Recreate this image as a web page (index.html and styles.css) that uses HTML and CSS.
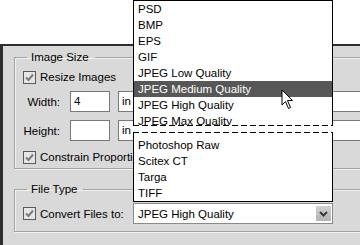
FILE: index.html
```html
<!DOCTYPE html>
<html lang="en">
<head>
    <meta charset="UTF-8">
    <title>Batch Options</title>
    <link rel="stylesheet" href="styles.css">
</head>
<body>
    <div class="dialog">
        <fieldset class="group size-group">
            <legend>Image Size</legend>
            <div class="check-row"><span class="check"><svg viewBox="0 0 11 11"><path d="M2 5.5 L4.5 8 L9 2.5" /></svg></span>Resize Images</div>
            <div class="field-row">
                <span class="field-label">Width:</span>
                <span class="text-box">4</span>
                <span class="unit-box">in</span>
            </div>
            <div class="field-row tall-gap">
                <span class="field-label">Height:</span>
                <span class="text-box"></span>
                <span class="unit-box">in</span>
            </div>
            <div class="check-row last-check"><span class="check"><svg viewBox="0 0 11 11"><path d="M2 5.5 L4.5 8 L9 2.5" /></svg></span><span class="clip-label">Constrain Proportions</span></div>
        </fieldset>

        <fieldset class="group type-group">
            <legend>File Type</legend>
            <div class="convert-row">
                <div class="check-row convert-check"><span class="check"><svg viewBox="0 0 11 11"><path d="M2 5.5 L4.5 8 L9 2.5" /></svg></span>Convert Files to:</div>
                <div class="select-box">
                    <span>JPEG High Quality</span>
                    <span class="select-btn"><svg viewBox="0 0 9 6"><path d="M1 1 L4.5 4.5 L8 1" /></svg></span>
                </div>
            </div>
        </fieldset>
    </div>

    <!-- Open list of the file type menu, drawn in two torn pieces -->
    <div class="menu menu-top">
        <div class="menu-list">
            <div class="menu-item">PSD</div>
            <div class="menu-item">BMP</div>
            <div class="menu-item">EPS</div>
            <div class="menu-item">GIF</div>
            <div class="menu-item">JPEG Low Quality</div>
            <div class="menu-item selected">JPEG Medium Quality</div>
            <div class="menu-item">JPEG High Quality</div>
            <div class="menu-item">JPEG Max Quality</div>
        </div>
        <div class="tear"></div>
    </div>
    <div class="menu menu-bottom">
        <div class="tear"></div>
        <div class="menu-list">
            <div class="menu-item">Photoshop Raw</div>
            <div class="menu-item">Scitex CT</div>
            <div class="menu-item">Targa</div>
            <div class="menu-item">TIFF</div>
        </div>
    </div>

    <svg class="cursor" viewBox="0 0 13 21" width="13" height="21">
        <path d="M1 1 L1 16 L4.5 12.5 L7.5 19.5 L9.5 18.5 L6.5 11.5 L11.5 11.5 Z" />
    </svg>
</body>
</html>
```

FILE: styles.css
```css
body {
    margin: 0;
    width: 360px;
    height: 245px;
    overflow: hidden;
    position: relative;
    background: #fff;
    font-family: "Liberation Sans", Arial, sans-serif;
    font-size: 11.5px;
    color: #000;
}
.dialog {
    margin-top: 44px;
    height: 199px;
    background: #d9d9d9;
    border-top: 2px solid #2e2e2e;
    border-left: 3px solid #2e2e2e;
    padding-left: 11px;
    overflow: hidden;
}
.group {
    margin: 4px -30px 0 0;
    padding: 0 0 4px 8px;
    border: 1px solid #a2a2a2;
    box-shadow: inset 1px 1px 0 #f2f2f2, 1px 1px 0 #f2f2f2;
    min-width: 0;
}
.group legend {
    margin-left: 4px;
    padding: 0 6px 0 4px;
    line-height: 14px;
}
.type-group {
    margin-top: 13px;
    padding-bottom: 7px;
}
.check-row {
    display: flex;
    align-items: center;
    gap: 4px;
    height: 14px;
    margin-top: 6px;
}
.last-check {
    margin-top: 9px;
}
.clip-label {
    width: 93px;
    overflow: hidden;
    white-space: nowrap;
}
.check {
    width: 11px;
    height: 11px;
    border: 1px solid #5a5a5a;
    background: #e6e6e6;
    display: flex;
}
.check svg {
    width: 11px;
    height: 11px;
    fill: none;
    stroke: #7c7c7c;
    stroke-width: 2;
}
.field-row {
    display: flex;
    align-items: center;
    height: 21px;
    margin-top: 7px;
}
.tall-gap {
    margin-top: 8px;
}
.field-label {
    width: 37px;
    text-align: right;
    margin-right: 10px;
}
.text-box {
    width: 35px;
    height: 19px;
    line-height: 19px;
    padding-left: 3px;
    border: 1px solid #7a7a7a;
    background: #fff;
    margin-right: 8px;
}
.unit-box {
    width: 260px;
    height: 19px;
    line-height: 19px;
    padding-left: 3px;
    border: 1px solid #7a7a7a;
    background: #fff;
    flex-shrink: 0;
}
.convert-row {
    display: flex;
    align-items: center;
    height: 21px;
    margin-top: 7px;
}
.convert-check {
    margin-top: 0;
    width: 110px;
}
.select-box {
    width: 194px;
    height: 19px;
    border: 1px solid #8a8a8a;
    background: #fff;
    display: flex;
    align-items: center;
    justify-content: space-between;
    padding-left: 4px;
}
.select-btn {
    width: 15px;
    height: 15px;
    margin-right: 1px;
    background: linear-gradient(#d0d0d0, #b4b4b4);
    display: flex;
    align-items: center;
    justify-content: center;
}
.select-btn svg {
    width: 9px;
    height: 6px;
    fill: none;
    stroke: #3a3a3a;
    stroke-width: 2;
}
/* Popup list */
.menu {
    position: absolute;
    left: 133px;
    width: 198px;
    background: #fff;
    border: 1px solid #000;
}
.menu-top {
    top: 0;
    border-bottom: none;
}
.menu-top .menu-list {
    height: 124px;
    overflow: hidden;
}
.menu-bottom {
    top: 132px;
    border-top: none;
}
.menu-bottom .menu-list {
    padding-top: 4px;
}
.tear {
    height: 1px;
    margin: 0 -1px;
    background: repeating-linear-gradient(90deg, #000 0 6px, transparent 6px 9px);
}
.menu-item {
    height: 16px;
    line-height: 16px;
    padding-left: 4px;
}
.menu-item.selected {
    background: #575757;
    color: #fff;
}
.cursor {
    position: absolute;
    left: 281px;
    top: 89px;
}
.cursor path {
    fill: #fff;
    stroke: #000;
    stroke-width: 1;
}
```
